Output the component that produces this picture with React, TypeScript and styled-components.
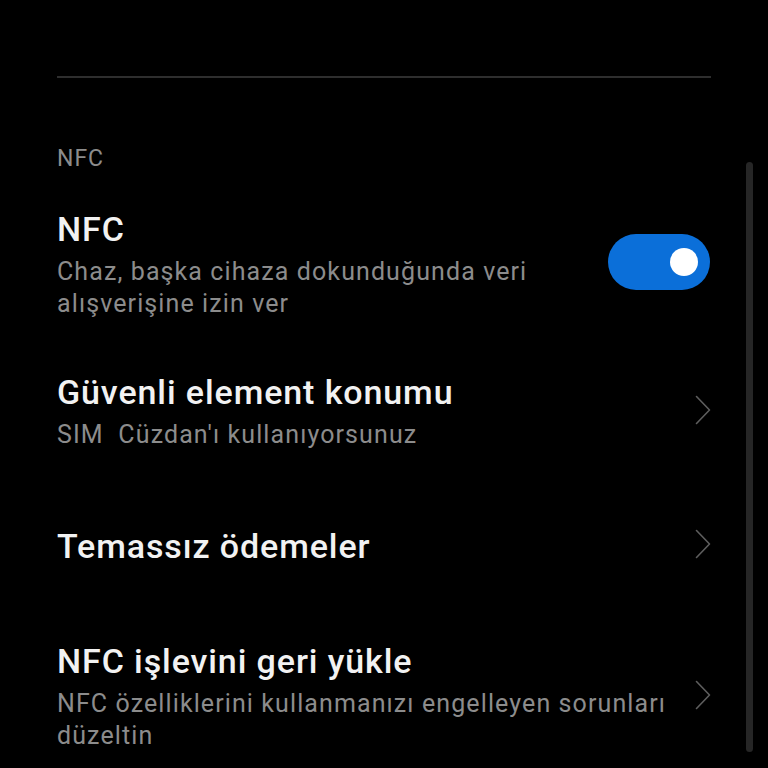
import React from 'react';
import styled, { createGlobalStyle } from 'styled-components';

const GlobalStyle = createGlobalStyle`
  html, body {
    margin: 0;
    padding: 0;
    background: #000;
  }
  body {
    font-family: Roboto, "Noto Sans", "Liberation Sans", sans-serif;
    color: #fff;
    overflow: hidden;
  }
`;

const Screen = styled.div`
  position: relative;
  width: 768px;
  height: 768px;
  background: #000;
  overflow: hidden;
`;

const Content = styled.div`
  padding: 76px 57px 0 57px;
`;

const Divider = styled.div`
  height: 2px;
  background: #2e2e2e;
`;

const SectionHeader = styled.div`
  margin: 67px 0 10px;
  font-size: 23px;
  line-height: 28px;
  letter-spacing: 1px;
  color: #8c8c8c;
`;

const Row = styled.div<{ $tall?: boolean }>`
  display: flex;
  align-items: center;
  gap: 10px;
  box-sizing: border-box;
  padding: 26px 0;
  min-height: ${p => (p.$tall ? '138px' : '0')};
`;

const TextCol = styled.div`
  flex: 1;
  min-width: 0;
  display: flex;
  flex-direction: column;
  gap: 7px;
`;

const Title = styled.div`
  font-size: 34px;
  line-height: 40px;
  font-weight: 500;
  letter-spacing: 0.9px;
  color: #f2f2f2;
`;

const Subtitle = styled.div`
  font-size: 25px;
  line-height: 32px;
  letter-spacing: 1.1px;
  color: #8c8c8c;
  white-space: pre-wrap;
`;

const Toggle = styled.div<{ $on: boolean }>`
  flex: none;
  width: 102px;
  height: 56px;
  border-radius: 28px;
  background: ${p => (p.$on ? '#0b6fd9' : '#3a3a3a')};
  display: flex;
  align-items: center;
  justify-content: ${p => (p.$on ? 'flex-end' : 'flex-start')};
  padding: 0 12px;
  box-sizing: border-box;
  margin: 0 1px 6px 0;
`;

const Knob = styled.div`
  width: 28px;
  height: 28px;
  border-radius: 50%;
  background: #fff;
`;

const ChevronBox = styled.div`
  flex: none;
  width: 16px;
  display: flex;
  justify-content: center;
  margin-bottom: 4px;
`;

const ScrollBar = styled.div`
  position: absolute;
  left: 746px;
  top: 162px;
  width: 7px;
  height: 590px;
  border-radius: 4px;
  background: #262626;
`;

const Chevron = () => (
  <ChevronBox>
    <svg width="16" height="30" viewBox="0 0 16 30" fill="none">
      <path d="M1.5 1.5 L14.5 15 L1.5 28.5" stroke="#5e5e5e" strokeWidth="1.6" strokeLinecap="round" strokeLinejoin="round" />
    </svg>
  </ChevronBox>
);

const App = () => {
  return (
    <Screen>
      <GlobalStyle />
      <Content>
        <Divider />
        <SectionHeader>NFC</SectionHeader>
        <Row>
          <TextCol>
            <Title>NFC</Title>
            <Subtitle>Chaz, başka cihaza dokunduğunda veri alışverişine izin ver</Subtitle>
          </TextCol>
          <Toggle $on>
            <Knob />
          </Toggle>
        </Row>
        <Row>
          <TextCol>
            <Title>Güvenli element konumu</Title>
            <Subtitle>{'SIM  Cüzdan\'ı kullanıyorsunuz'}</Subtitle>
          </TextCol>
          <Chevron />
        </Row>
        <Row $tall>
          <TextCol>
            <Title>Temassız ödemeler</Title>
          </TextCol>
          <Chevron />
        </Row>
        <Row>
          <TextCol>
            <Title>NFC işlevini geri yükle</Title>
            <Subtitle>NFC özelliklerini kullanmanızı engelleyen sorunları düzeltin</Subtitle>
          </TextCol>
          <Chevron />
        </Row>
      </Content>
      <ScrollBar />
    </Screen>
  );
};

export default App;
